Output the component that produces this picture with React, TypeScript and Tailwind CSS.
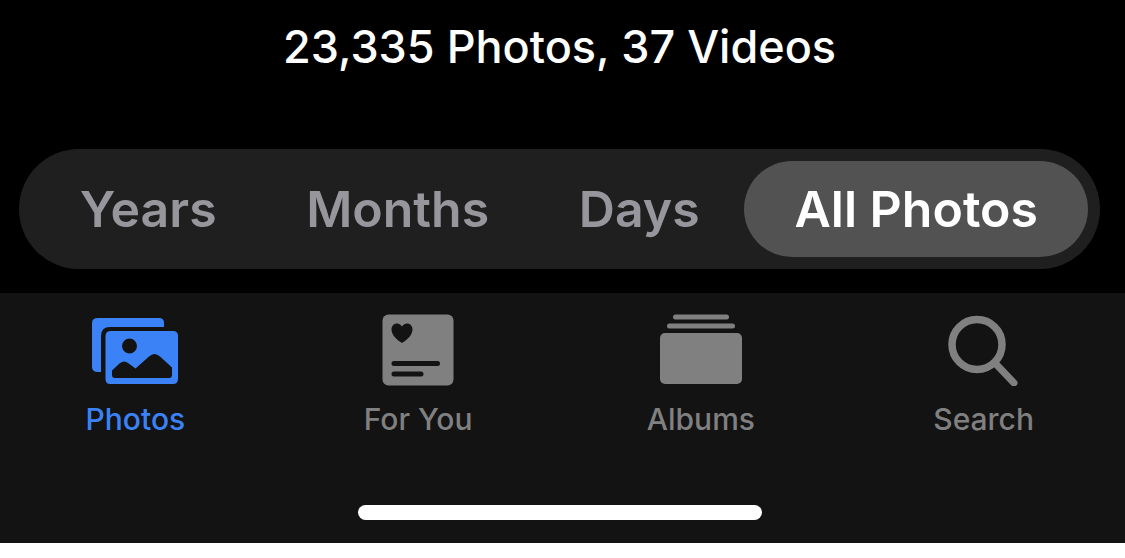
import { useState } from 'react';
import clsx from 'clsx';

const ranges = ['Years', 'Months', 'Days', 'All Photos'];

function PhotosIcon() {
  return (
    <svg width="88" height="72" viewBox="0 0 88 72" fill="currentColor" aria-hidden="true">
      {/* back picture */}
      <path d="M7 4H68Q73 4 73 9V13H19Q10 13 10 22V58H7Q1 58 1 53V9Q1 4 7 4Z" />
      {/* front picture with the sun and hills cut out */}
      <path
        fillRule="evenodd"
        d="M20 17H82Q87 17 87 22V65Q87 70 82 70H19Q14.500 70 14.500 65V22Q14.500 17 20 17Z
           M38.500 24.500A7.500 7.500 0 1 0 38.500 39.500A7.500 7.500 0 1 0 38.500 24.500Z
           M21 56.500L29 49Q33.500 46 37 49L44.500 54.500L58 42.500Q63.500 37.500 69 42.500L81 53.500V61Q81 64 78 64H24Q21 64 21 61Z"
      />
    </svg>
  );
}

function ForYouIcon() {
  return (
    <svg width="88" height="72" viewBox="0 0 88 72" aria-hidden="true">
      <rect x="8.500" y="0.500" width="71" height="71" rx="6" fill="currentColor" />
      <path
        d="M28 29C23 26 17.500 21 17.500 15.500C17.500 9 25 7.500 28 12.500C31 7.500 38.500 9 38.500 15.500C38.500 21 33 26 28 29Z"
        fill="#131313"
      />
      <path d="M20 49.500H63.500M20 60H47" stroke="#131313" strokeWidth="5" strokeLinecap="round" />
    </svg>
  );
}

function AlbumsIcon() {
  return (
    <svg width="88" height="72" viewBox="0 0 88 72" fill="currentColor" aria-hidden="true">
      <rect x="16" y="0.500" width="56" height="5" rx="2.500" />
      <rect x="10" y="9.500" width="68" height="5" rx="2.500" />
      <rect x="3" y="19" width="82" height="51" rx="5" />
    </svg>
  );
}

function SearchIcon() {
  return (
    <svg width="88" height="72" viewBox="0 0 88 72" fill="none" stroke="currentColor" aria-hidden="true">
      <circle cx="37" cy="30.500" r="25" strokeWidth="7.500" />
      <path d="M55 49L74 69" strokeWidth="7" strokeLinecap="round" />
    </svg>
  );
}

const tabs = [
  { label: 'Photos', icon: <PhotosIcon /> },
  { label: 'For You', icon: <ForYouIcon /> },
  { label: 'Albums', icon: <AlbumsIcon /> },
  { label: 'Search', icon: <SearchIcon /> },
];

export default function App() {
  const [range, setRange] = useState('All Photos');
  const [tab, setTab] = useState('Photos');

  return (
    <div className="min-h-screen bg-white font-['Inter',sans-serif]">
      <main className="bg-black pt-5 pr-[25px] pb-6 pl-[19px]">
        <h1 className="text-center text-[45px] leading-[54px] font-medium text-white">
          23,335 Photos, 37 Videos
        </h1>

        {/* time range switch */}
        <div className="mt-[75px] flex rounded-full bg-[#1f1f1f] py-3 pr-3 pl-4">
          {ranges.map((item) => (
            <button
              key={item}
              type="button"
              aria-pressed={range === item}
              onClick={() => setRange(item)}
              className={clsx(
                'h-24 rounded-full text-[50px] font-semibold whitespace-nowrap',
                range === item
                  ? 'flex-none bg-[#525252] px-[50px] text-white'
                  : 'flex-auto text-[#98969d]',
              )}
            >
              {item}
            </button>
          ))}
        </div>
      </main>

      <footer className="bg-[#131313] pt-[21px] pb-[23px]">
        <nav className="-ml-1.5 grid grid-cols-4">
          {tabs.map(({ label, icon }) => (
            <button
              key={label}
              type="button"
              onClick={() => setTab(label)}
              className={clsx(
                'flex flex-col items-center gap-[11px]',
                tab === label ? 'text-[#3b82f6]' : 'text-[#808080]',
              )}
            >
              {icon}
              <span className="text-[30px] leading-[44px] font-medium">{label}</span>
            </button>
          ))}
        </nav>

        {/* home indicator */}
        <div className="mt-16 pr-1.5">
          <div className="mx-auto h-[15px] w-[404px] rounded-full bg-white" />
        </div>
      </footer>
    </div>
  );
}
